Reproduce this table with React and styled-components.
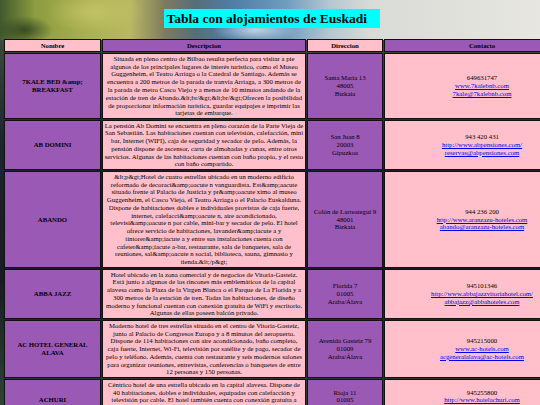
import React from "react"
import styled, { createGlobalStyle } from "styled-components"

const GlobalStyle = createGlobalStyle`
  html, body {
    margin: 0;
    padding: 0;
    overflow: hidden;
  }
  body {
    min-height: 405px;
    font-family: "Liberation Serif", "Times New Roman", serif;
    background:
      radial-gradient(ellipse 70px 30px at 95px 12px, rgba(196, 196, 104, 0.85), transparent 70%),
      radial-gradient(ellipse 40px 20px at 25px 30px, rgba(40, 60, 30, 0.8), transparent 70%),
      radial-gradient(ellipse 60px 18px at 255px 30px, rgba(230, 240, 245, 0.7), transparent 70%),
      linear-gradient(to right, #40582c 0px, #8c9c3f 35px, #aab152 90px, #b9b862 130px, #7e7a60 165px, #556e78 195px, #4f7fa8 235px, #6f9bbd 285px, #b5c7d2 330px, #d9dbd6 370px, #e7e6e0 540px) top left / 100% 40px no-repeat,
      linear-gradient(to bottom, #3b4a3a 40px, #1d2530 140px, #171c24 280px, #2e4434 405px);
  }
`

const Page = styled.div`
  padding: 9px 0 0 3px;
`

const Title = styled.h1`
  box-sizing: border-box;
  width: 216px;
  margin: 0 auto 10px;
  padding: 1.7px 3px;
  background: #00ffff;
  color: #000;
  font-size: 13.5px;
  line-height: 15.6px;
  font-weight: 700;
  text-align: left;
`

const Table = styled.table`
  width: 578px;
  table-layout: fixed;
  border-collapse: separate;
  border-spacing: 1px;
  font-size: 6.75px;
  line-height: 7.76px;
  color: #000;
`

const HeadCell = styled.th`
  box-sizing: border-box;
  width: ${p => p.$w}px;
  padding: 1.7px 1px;
  border: 1px solid #111;
  background: ${p => (p.$tone === "purple" ? "#9b59b6" : "#ffc0cb")};
  font-weight: 700;
  text-align: center;
`

const Cell = styled.td`
  box-sizing: border-box;
  padding: 0.8px 1.5px;
  border: 1px solid #111;
  background: ${p => (p.$tone === "purple" ? "#9b59b6" : "#ffc0cb")};
  font-weight: 400;
  text-align: center;
  vertical-align: middle;
`

const NameCell = styled(Cell)`
  padding: 0.8px 5px;
  font-weight: 700;
`

const Link = styled.a`
  color: #0000ee;
  text-decoration: underline;
`

const columns = [
  { label: "Nombre", w: 97, tone: "pink" },
  { label: "Descripcion", w: 204, tone: "purple" },
  { label: "Direccion", w: 76, tone: "pink" },
  { label: "Contacto", w: 196, tone: "purple" },
]

const hotels = [
  {
    name: "7KALE BED &amp; BREAKFAST",
    desc: "Situada en pleno centro de Bilbao resulta perfecta para visitar a pie algunos de los principales lugares de interés turístico, como el Museo Guggenheim, el Teatro Arriaga o la Catedral de Santiago. Además se encuentra a 200 metros de la parada de tranvía Arriaga, a 300 metros de la parada de metro Casco Viejo y a menos de 10 minutos andando de la estación de tren de Abando.&lt;br/&gt;&lt;br/&gt;Ofrecen la posibilidad de proporcionar información turística, guardar equipajes e imprimir las tarjetas de embarque.",
    address: ["Santa María 13", "48005", "Bizkaia"],
    phone: "649631747",
    web: "www.7kalebnb.com",
    mail: "7kale@7kalebnb.com",
  },
  {
    name: "AB DOMINI",
    desc: "La pensión Ab Domini se encuentra en pleno corazón de la Parte Vieja de San Sebastián. Las habitaciones cuentan con televisión, calefacción, mini bar, Internet (WIFI), caja de seguridad y secador de pelo. Además, la pensión dispone de ascensor, carta de almohadas y cunas, entre otros servicios. Algunas de las habitaciones cuentan con baño propio, y el resto con baño compartido.",
    address: ["San Juan 8", "20003", "Gipuzkoa"],
    phone: "943 420 431",
    web: "http://www.abpensiones.com/",
    mail: "reservas@abpensiones.com",
  },
  {
    name: "ABANDO",
    desc: "&lt;p&gt;Hotel de cuatro estrellas ubicado en un moderno edificio reformado de decoraci&amp;oacute n vanguardista. Est&amp;aacute situado frente al Palacio de Justicia y pr&amp;oacute ximo al museo Guggenheim, el Casco Viejo, el Teatro Arriaga o el Palacio Euskalduna. Dispone de habitaciones dobles e individuales provistas de caja fuerte, internet, calefacci&amp;oacute n, aire acondicionado, televisi&amp;oacute n por cable, mini-bar y secador de pelo. El hotel ofrece servicio de habitaciones, lavander&amp;iacute a y tintorer&amp;iacute a y entre sus instalaciones cuenta con cafeter&amp;iacute a-bar, restaurante, sala de banquetes, sala de reuniones, sal&amp;oacute n social, biblioteca, sauna, gimnasio y tienda.&lt;/p&gt;",
    address: ["Colón de Larreategui 9", "48001", "Bizkaia"],
    phone: "944 236 200",
    web: "http://www.aranzazu-hoteles.com",
    mail: "abando@aranzazu-hoteles.com",
  },
  {
    name: "ABBA JAZZ",
    desc: "Hotel ubicado en la zona comercial y de negocios de Vitoria-Gasteiz. Está junto a algunos de los rincones más emblemáticos de la capital alavesa como la Plaza de la Virgen Blanca o el Parque de La Florida y a 300 metros de la estación de tren. Todas las habitaciones, de diseño moderno y funcional cuentan con conexión gratuita de WiFi y escritorio. Algunas de ellas poseen balcón privado.",
    address: ["Florida 7", "01005", "Araba/Álava"],
    phone: "945101346",
    web: "http://www.abbajazzvitoriahotel.com/",
    mail: "abbajazz@abbahoteles.com",
  },
  {
    name: "AC HOTEL GENERAL ALAVA",
    desc: "Moderno hotel de tres estrellas situado en el centro de Vitoria-Gasteiz, junto al Palacio de Congresos Europa y a 8 minutos del aeropuerto. Dispone de 114 habitaciones con aire acondicionado, baño completo, caja fuerte, Internet, Wi-Fi, televisión por satélite y de pago, secador de pelo y teléfono. Además, cuenta con restaurante y seis modernos salones para organizar reuniones, entrevistas, conferencias o banquetes de entre 12 personas y 150 personas.",
    address: ["Avenida Gasteiz 79", "01009", "Araba/Álava"],
    phone: "945215000",
    web: "www.ac-hotels.com",
    mail: "acgeneralalava@ac-hotels.com",
  },
  {
    name: "ACHURI",
    desc: "Céntrico hotel de una estrella ubicado en la capital alavesa. Dispone de 40 habitaciones, dobles e individuales, equipadas con calefacción y televisión por cable. El hotel también cuenta con conexión gratuita a WiFi en todas sus zonas comunes, consigna de equipajes y servicio de información turística.",
    address: ["Rioja 11", "01005", "Araba/Álava"],
    phone: "945255800",
    web: "http://www.hotelachuri.com",
    mail: "hotel@hotelachuri.com",
  },
]

export default function App() {
  return (
    <Page>
      <GlobalStyle />
      <Title>Tabla con alojamientos de Euskadi</Title>
      <Table>
        <thead>
          <tr>
            {columns.map(c => (
              <HeadCell key={c.label} $w={c.w} $tone={c.tone}>{c.label}</HeadCell>
            ))}
          </tr>
        </thead>
        <tbody>
          {hotels.map(h => (
            <tr key={h.name}>
              <NameCell $tone="purple">{h.name}</NameCell>
              <Cell $tone="pink">{h.desc}</Cell>
              <Cell $tone="purple">
                {h.address[0]}<br />{h.address[1]}<br />{h.address[2]}
              </Cell>
              <Cell $tone="pink">
                {h.phone}<br />
                <Link href="#">{h.web}</Link><br />
                <Link href="#">{h.mail}</Link>
              </Cell>
            </tr>
          ))}
        </tbody>
      </Table>
    </Page>
  )
}
